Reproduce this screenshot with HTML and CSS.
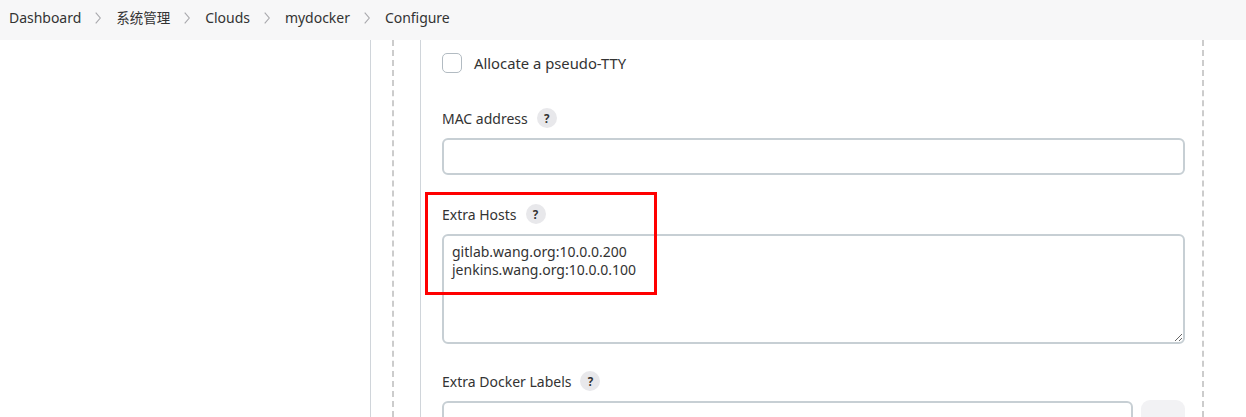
FILE: index.html
```html
<!DOCTYPE html>
<html>
<head>
<meta charset="utf-8">
<link rel="stylesheet" href="styles.css">
</head>
<body>
<nav class="crumbs">
  <span class="crumb">Dashboard</span><svg class="sep" width="6" height="12" viewBox="0 0 6 12"><polyline points="0.7,0.7 5.3,6 0.7,11.3" fill="none" stroke="#a8a8ac" stroke-width="1.1"/></svg>
  <span class="crumb cjk">系统管理</span><svg class="sep" width="6" height="12" viewBox="0 0 6 12"><polyline points="0.7,0.7 5.3,6 0.7,11.3" fill="none" stroke="#a8a8ac" stroke-width="1.1"/></svg>
  <span class="crumb">Clouds</span><svg class="sep" width="6" height="12" viewBox="0 0 6 12"><polyline points="0.7,0.7 5.3,6 0.7,11.3" fill="none" stroke="#a8a8ac" stroke-width="1.1"/></svg>
  <span class="crumb">mydocker</span><svg class="sep" width="6" height="12" viewBox="0 0 6 12"><polyline points="0.7,0.7 5.3,6 0.7,11.3" fill="none" stroke="#a8a8ac" stroke-width="1.1"/></svg>
  <span class="crumb">Configure</span>
</nav>
<main class="page">
  <div class="outer">
    <div class="dashed">
      <div class="group">
        <div class="fields">
          <label class="check"><span class="box"></span><span class="checktext">Allocate a pseudo-TTY</span></label>
          <div class="field mac">
            <div class="label">MAC address <span class="help">?</span></div>
            <input class="text" type="text">
          </div>
          <div class="field hosts">
            <div class="label">Extra Hosts <span class="help">?</span></div>
            <textarea class="area">gitlab.wang.org:10.0.0.200
jenkins.wang.org:10.0.0.100</textarea>
            <div class="mark"></div>
          </div>
          <div class="field labels">
            <div class="label">Extra Docker Labels <span class="help">?</span></div>
            <div class="row">
              <input class="text" type="text">
              <span class="btn"><svg width="12" height="6" viewBox="0 0 12 6"><path d="M3 1 L3 6 M9 1 L9 6" stroke="#b8b8bc" stroke-width="1.4"/></svg></span>
            </div>
          </div>
        </div>
      </div>
    </div>
  </div>
</main>
</body>
</html>
```

FILE: styles.css
```css
html, body {
  margin: 0;
  padding: 0;
  background: #fff;
  font-family: "Noto Sans", "Noto Sans CJK SC", sans-serif;
  color: #333;
  font-size: 14px;
  overflow: hidden;
  height: 417px;
}
.crumbs {
  height: 40px;
  box-sizing: border-box;
  background: #f7f7f8;
  display: flex;
  align-items: center;
  padding-left: 9px;
  padding-bottom: 6px;
  font-size: 14px;
  color: #333;
}
.crumb {
  letter-spacing: -0.03px;
}
.cjk {
  font-family: "Noto Sans CJK SC", sans-serif;
  font-size: 13.5px;
  letter-spacing: 0;
}
.sep {
  margin: 1px 15px 0 14px;
  flex: none;
}
.page {
  padding-left: 370px;
  height: 377px;
  overflow: hidden;
}
.outer {
  border-left: 1px solid #d0d5da;
  padding-left: 21px;
  height: 100%;
}
.dashed {
  border-left: 2px dashed #ccc;
  border-right: 2px dashed #ccc;
  width: 812px;
  padding-left: 26px;
  height: 100%;
  box-sizing: border-box;
}
.group {
  border-left: 1px solid #d0d5da;
  padding-left: 21px;
  height: 100%;
}
.fields {
  display: flex;
  flex-direction: column;
  padding-top: 13px;
  width: 743px;
}
.check {
  display: flex;
  align-items: center;
  gap: 12px;
  height: 20px;
}
.checktext {
  font-size: 14.8px;
}
.box {
  width: 18px;
  height: 18px;
  border: 1.5px solid #b2bbc2;
  border-radius: 5px;
  display: inline-block;
  flex: none;
}
.field {
  display: flex;
  flex-direction: column;
  position: relative;
}
.mac { margin-top: 35px; }
.hosts { margin-top: 29px; }
.labels { margin-top: 27px; }
.label {
  display: flex;
  align-items: center;
  height: 20px;
  gap: 9px;
  margin-bottom: 10px;
}
.help {
  width: 20px;
  height: 20px;
  border-radius: 50%;
  background: #e8e8eb;
  font-size: 11.5px;
  font-weight: 700;
  display: inline-flex;
  align-items: center;
  justify-content: center;
  color: #333;
}
.text {
  height: 37px;
  box-sizing: border-box;
  border: 2px solid #c7cfd4;
  border-radius: 6px;
  width: 743px;
  margin: 0;
  font: inherit;
  padding: 0 10px;
  background: #fff;
  flex: none;
}
.area {
  height: 110px;
  box-sizing: border-box;
  border: 2px solid #c7cfd4;
  border-radius: 6px;
  width: 743px;
  margin: 0;
  font-family: "Noto Sans", sans-serif;
  font-size: 14px;
  line-height: 18px;
  color: #333;
  padding: 7px 8px;
  resize: vertical;
}
.mark {
  position: absolute;
  left: -17px;
  top: -12px;
  width: 226px;
  height: 97px;
  border: 3px solid #ff0000;
}
.row {
  display: flex;
  gap: 8px;
}
.row .text {
  width: 691px;
}
.btn {
  width: 44px;
  height: 36px;
  background: #f2f2f4;
  border-radius: 9px;
  display: flex;
  align-items: flex-end;
  justify-content: center;
  margin-top: -1px;
  flex: none;
}
```
